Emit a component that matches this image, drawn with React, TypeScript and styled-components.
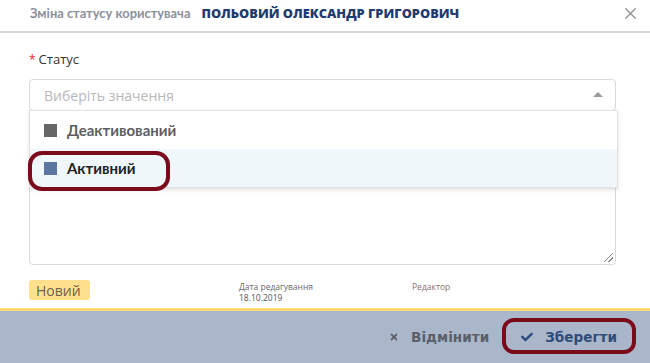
import React from "react";
import styled, { createGlobalStyle } from "styled-components";
import { X } from "lucide-react";
import { FaCheck, FaTimes } from "react-icons/fa";

const GlobalStyle = createGlobalStyle`
    html, body {
        margin: 0;
        padding: 0;
        background: #ffffff;
        font-family: "Open Sans", "Liberation Sans", sans-serif;
    }
    * {
        box-sizing: border-box;
    }
`;

type Option = { id: string; label: string; color: string; active?: boolean };

const options: Option[] = [
    { id: "inactive", label: "Деактивований", color: "#666666" },
    { id: "active", label: "Активний", color: "#5b76a0", active: true },
];

const App: React.FC = () => {
    return (
        <>
            <GlobalStyle />
            <Modal>
                <Header>
                    <Title>
                        <Caption>Зміна статусу користувача</Caption>
                        <UserName>ПОЛЬОВИЙ ОЛЕКСАНДР ГРИГОРОВИЧ</UserName>
                    </Title>
                    <CloseButton aria-label="Закрити">
                        <X size={19} strokeWidth={1.6} />
                    </CloseButton>
                </Header>

                <Body>
                    <Label>
                        <Required>*</Required>Статус
                    </Label>
                    <SelectWrapper>
                        <Select>
                            <Placeholder>Виберіть значення</Placeholder>
                            <Arrow />
                        </Select>
                        <Dropdown>
                            {options.map(option => (
                                <OptionRow key={option.id} active={option.active}>
                                    <Swatch color={option.color} />
                                    <OptionText active={option.active}>{option.label}</OptionText>
                                    {option.active && <ItemMark />}
                                </OptionRow>
                            ))}
                        </Dropdown>
                    </SelectWrapper>
                    <Comment />

                    <InfoRow>
                        <Badge>Новий</Badge>
                        <Meta>
                            <MetaLabel>Дата редагування</MetaLabel>
                            <MetaValue>18.10.2019</MetaValue>
                        </Meta>
                        <Meta>
                            <MetaLabel editor>Редактор</MetaLabel>
                        </Meta>
                    </InfoRow>
                </Body>

                <Footer>
                    <FooterButton>
                        <FaTimes size={10} />
                        Відмінити
                    </FooterButton>
                    <FooterButton primary>
                        <FaCheck size={12} />
                        Зберегти
                        <ButtonMark />
                    </FooterButton>
                </Footer>
            </Modal>
        </>
    );
};

export default App;

const Modal = styled.div`
    width: 650px;
    height: 363px;
    display: flex;
    flex-direction: column;
    background: #ffffff;
    overflow: hidden;
`;

const Header = styled.div`
    height: 33px;
    display: flex;
    align-items: flex-start;
    justify-content: space-between;
    padding: 1px 10px 0 30px;
    border-bottom: 2px solid #d4d8dd;
`;

const Title = styled.div`
    display: flex;
    align-items: baseline;
    gap: 11px;
    line-height: 24px;
`;

const Caption = styled.span`
    font-family: Lato, "Open Sans", sans-serif;
    font-size: 12.9px;
    font-weight: 700;
    color: #8c9099;
`;

const UserName = styled.span`
    font-size: 12.8px;
    font-weight: 800;
    color: #1e3c70;
`;

const CloseButton = styled.button`
    border: none;
    background: none;
    padding: 3px 0 0;
    color: #8e8e8e;
    display: flex;
`;

const Body = styled.div`
    flex: 1;
    padding: 17px 34px 0 29px;
    display: flex;
    flex-direction: column;
`;

const Label = styled.div`
    font-size: 13px;
    line-height: 18px;
    color: #333333;
    margin-bottom: 10px;
`;

const Required = styled.span`
    color: #f5222d;
    font-size: 12px;
    margin-right: 3px;
`;

const SelectWrapper = styled.div`
    position: relative;
    z-index: 2;
`;

const Select = styled.div`
    height: 32px;
    border: 1px solid #d9d9d9;
    border-radius: 4px;
    display: flex;
    align-items: center;
    justify-content: space-between;
    padding: 0 12px 0 14px;
`;

const Placeholder = styled.span`
    font-size: 14px;
    color: #b8b8b8;
`;

const Arrow = styled.span`
    width: 0;
    height: 0;
    border-left: 5px solid transparent;
    border-right: 5px solid transparent;
    border-bottom: 5px solid #9a9a9a;
    margin-top: -1px;
`;

const Dropdown = styled.div`
    position: absolute;
    top: 31px;
    left: 0;
    width: 589px;
    background: #ffffff;
    border: 1px solid #e2e2e2;
    box-shadow: 0 2px 4px rgba(0, 0, 0, 0.12);
`;

const OptionRow = styled.div<{ active?: boolean }>`
    position: relative;
    height: 38px;
    display: flex;
    align-items: center;
    padding-left: 14px;
    gap: 10px;
    background: ${({ active }) => (active ? "#eff7fb" : "#ffffff")};
`;

const Swatch = styled.span<{ color: string }>`
    width: 13px;
    height: 13px;
    background: ${({ color }) => color};
`;

const OptionText = styled.span<{ active?: boolean }>`
    font-family: Lato, "Open Sans", sans-serif;
    font-size: 15px;
    font-weight: 700;
    color: ${({ active }) => (active ? "#222222" : "#5e5e5e")};
`;

const ItemMark = styled.span`
    position: absolute;
    left: -2px;
    top: 2px;
    width: 142px;
    height: 40px;
    border: 4px solid #7c0a1d;
    border-radius: 14px;
`;

const Comment = styled.div`
    margin-top: 10px;
    height: 144px;
    border: 1px solid #d9d9d9;
    border-radius: 4px;
    position: relative;

    &::after {
        content: "";
        position: absolute;
        right: 2px;
        bottom: 2px;
        width: 9px;
        height: 9px;
        background: linear-gradient(
            135deg,
            transparent 45%,
            #8a8a8a 45%,
            #8a8a8a 52%,
            transparent 52%,
            transparent 72%,
            #8a8a8a 72%,
            #8a8a8a 80%,
            transparent 80%
        );
    }
`;

const InfoRow = styled.div`
    display: flex;
    align-items: flex-start;
    margin-top: 15px;
`;

const Badge = styled.span`
    width: 61px;
    height: 20px;
    display: flex;
    align-items: center;
    padding-left: 7px;
    background: #ffe18d;
    border-radius: 3px;
    font-size: 14px;
    color: #6d6247;
    margin-right: 149px;
`;

const Meta = styled.div`
    width: 173px;
    display: flex;
    flex-direction: column;
    font-size: 8.5px;
    line-height: 11px;
    padding-top: 1px;
`;

const MetaLabel = styled.span<{ editor?: boolean }>`
    color: ${({ editor }) => (editor ? "#8a6f72" : "#6a6a6a")};
`;

const MetaValue = styled.span`
    color: #555555;
`;

const Footer = styled.div`
    height: 55px;
    border-top: 3px solid #ffd873;
    background: #aab6c9;
    display: flex;
    align-items: center;
    justify-content: flex-end;
    gap: 32px;
    padding: 0 33px 0 0;
`;

const FooterButton = styled.button<{ primary?: boolean }>`
    position: relative;
    border: none;
    background: none;
    padding: 0;
    display: flex;
    align-items: center;
    gap: 12px;
    font-family: "DejaVu Sans", Verdana, sans-serif;
    font-size: 13.6px;
    font-weight: 700;
    color: ${({ primary }) => (primary ? "#2e4c7c" : "#5a5f69")};
`;

const ButtonMark = styled.span`
    position: absolute;
    left: -19px;
    top: -11px;
    width: 134px;
    height: 36px;
    border: 4px solid #7c0a1d;
    border-radius: 12px;
`;
